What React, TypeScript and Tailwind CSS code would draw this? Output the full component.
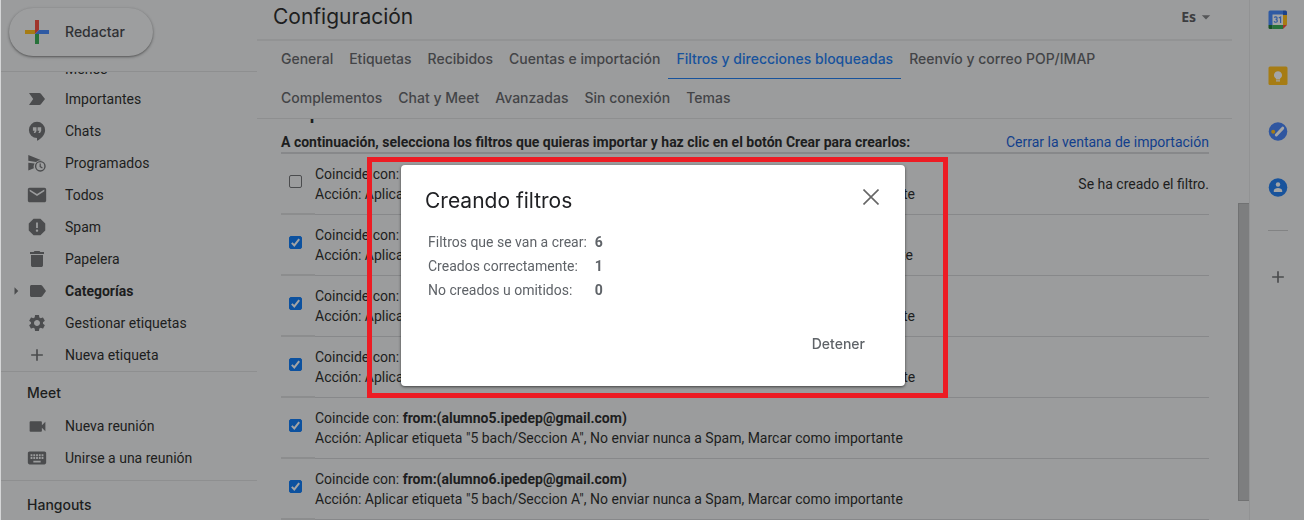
import type { ReactNode } from "react";
import {
  MdAdd,
  MdArrowDropDown,
  MdArrowRight,
  MdKeyboard,
  MdMail,
  MdReport,
  MdSettings,
  MdVideocam,
} from "react-icons/md";

function ImportantIcon() {
  return (
    <svg width="18" height="14" viewBox="0 0 18 14" aria-hidden="true">
      <path fill="currentColor" d="M1 1h10.300c.7 0 1.200.3 1.600.8L17 7l-4.100 5.200c-.4.500-.9.800-1.600.8H1l4.200-6Z" />
    </svg>
  );
}

function HangoutsIcon() {
  return (
    <svg width="18" height="20" viewBox="0 0 18 20" aria-hidden="true">
      <path
        fill="currentColor"
        fillRule="evenodd"
        d="M9 .8a8.1 8.1 0 0 0 0 16.2v2.800c4.800-2.300 8.100-6.500 8.100-10.900A8.100 8.100 0 0 0 9 .8ZM4.900 6.200h3.600v3.700L7.300 12H5.700l1-2.200H4.900Zm4.700 0h3.600v3.700L12 12h-1.600l1-2.200H9.600Z"
      />
    </svg>
  );
}

function ScheduledIcon() {
  return (
    <svg width="18" height="18" viewBox="0 0 18 18" aria-hidden="true">
      <path fill="currentColor" d="M.3 1 14 6.600A6.600 6.600 0 0 0 8 7.900L.3 6.800ZM.3 8.800l6.300.6a6 6 0 0 0-.8 4.900L.3 16.500Z" />
      <circle cx="12.300" cy="12.300" r="4.700" fill="none" stroke="currentColor" strokeWidth="1.400" />
      <path fill="none" stroke="currentColor" strokeWidth="1.200" d="M12.200 9.600v3l2.200 1.300" />
    </svg>
  );
}

function TrashIcon() {
  return (
    <svg width="16" height="18" viewBox="0 0 16 18" aria-hidden="true">
      <path
        fill="currentColor"
        d="M5.500 1h5l.8 1H15v2H1V2h3.700ZM2 5h12v10.200c0 1-.8 1.800-1.800 1.800H3.800c-1 0-1.800-.8-1.800-1.800Z"
      />
    </svg>
  );
}

function LabelIcon() {
  return (
    <svg width="18" height="14" viewBox="0 0 18 14" className="ml-px shrink-0" aria-hidden="true">
      <path
        fill="currentColor"
        d="M2.500 1h9.300c.6 0 1 .3 1.400.8L17 7l-3.800 5.200c-.4.5-.8.8-1.400.8H2.500C1.700 13 1 12.300 1 11.500v-9C1 1.700 1.700 1 2.500 1Z"
      />
    </svg>
  );
}

function PlusLogo() {
  return (
    <svg width="24" height="24" viewBox="0 0 24 24" aria-hidden="true">
      <path fill="#a0342c" d="M10 0h4v10l-4 4Z" />
      <path fill="#a67c14" d="M0 10h10v4H0Z" />
      <path fill="#2f5aa3" d="M14 10h10v4H10Z" />
      <path fill="#27723a" d="M10 14h4v10h-4Z" />
    </svg>
  );
}

function CalendarIcon() {
  return (
    <svg width="20" height="20" viewBox="0 0 20 20" aria-hidden="true">
      <path fill="#2f5aa3" d="M2 .5h13v4.500H5v10H.5V2A1.500 1.500 0 0 1 2 .5Z" />
      <path fill="#1b428c" d="M15 .5h2.500A1.500 1.500 0 0 1 19 2v3h-4Z" />
      <path fill="#a67c14" d="M15 5h4v10h-4Z" />
      <path fill="#27723a" d="M4.500 15H15v4H4.500Z" />
      <path fill="#175227" d="M.5 15h4v4H2a1.500 1.500 0 0 1-1.500-1.500Z" />
      <path fill="#a0342c" d="M15 15h4l-4 4Z" />
      <path fill="#a3a4a5" d="M4.500 4.500H15V15H4.500Z" />
      <path
        fill="none"
        stroke="#2f5aa3"
        strokeWidth="1.200"
        d="M6.300 7.600c.6-1.100 3-.9 2.800.6 0 .9-.8 1.200-1.500 1.200.9 0 1.700.5 1.700 1.500 0 1.600-2.600 1.800-3.200.4M10.800 8.100l1.800-1v6"
      />
    </svg>
  );
}

function KeepIcon() {
  return (
    <svg width="20" height="20" viewBox="0 0 20 20" aria-hidden="true">
      <rect x=".5" y=".5" width="19" height="18.500" rx="1.500" fill="#a67c14" />
      <path fill="#a3a4a5" d="M10 5.200a4 4 0 0 0-2.100 7.400V13.500h4.200v-.9A4 4 0 0 0 10 5.200ZM8 14.200h4v1.300H8Z" />
    </svg>
  );
}

function TasksIcon() {
  return (
    <svg width="20" height="20" viewBox="0 0 20 20" aria-hidden="true">
      <circle cx="10" cy="9.500" r="9.300" fill="#2f56a0" />
      <path stroke="#a3a4a5" strokeWidth="3" strokeLinecap="round" d="m8.300 13 6.400-6.800" />
      <circle cx="5.200" cy="9.800" r="2" fill="#a67c14" />
    </svg>
  );
}

function ContactsIcon() {
  return (
    <svg width="20" height="20" viewBox="0 0 20 20" aria-hidden="true">
      <circle cx="10" cy="9.500" r="9.300" fill="#18539c" />
      <circle cx="10" cy="6.500" r="2.200" fill="#a3a4a5" />
      <path fill="#a3a4a5" d="M5.800 14v-1.300c0-1.800 2.200-2.700 4.200-2.700s4.200.9 4.200 2.700V14Z" />
    </svg>
  );
}

type NavItem = { label: string; icon?: ReactNode; bold?: boolean; expandable?: boolean };

const folders: NavItem[] = [
  { label: "Importantes", icon: <ImportantIcon /> },
  { label: "Chats", icon: <HangoutsIcon /> },
  { label: "Programados", icon: <ScheduledIcon /> },
  { label: "Todos", icon: <MdMail size={22} /> },
  { label: "Spam", icon: <MdReport size={22} /> },
  { label: "Papelera", icon: <TrashIcon /> },
  { label: "Categorías", icon: <LabelIcon />, bold: true, expandable: true },
  { label: "Gestionar etiquetas", icon: <MdSettings size={20} /> },
  { label: "Nueva etiqueta", icon: <MdAdd size={20} /> },
];

const meetings: NavItem[] = [
  { label: "Nueva reunión", icon: <MdVideocam size={21} /> },
  { label: "Unirse a una reunión", icon: <MdKeyboard size={22} /> },
];

function NavList({ items }: { items: NavItem[] }) {
  return (
    <ul>
      {items.map((item) => (
        <li key={item.label}>
          <a href="#" className="flex h-8 items-center text-sm text-[#1d1e20]">
            <span className="flex w-6 justify-end text-[#4b4c4e]">
              {item.expandable && <MdArrowRight size={18} />}
            </span>
            <span className="flex w-6 justify-center text-[#4b4c4e]">{item.icon}</span>
            <span className={item.bold ? "ml-4 font-bold" : "ml-4"}>{item.label}</span>
          </a>
        </li>
      ))}
    </ul>
  );
}

function Sidebar() {
  return (
    <aside className="flex w-64 shrink-0 flex-col">
      <div className="z-10 h-[72px] shrink-0 border-b border-[#8e8f90] bg-[#9b9c9d] pt-2 pl-2">
        <button
          type="button"
          className="flex h-12 w-36 items-center gap-4 rounded-full bg-[#9d9e9f] pl-4 font-[Inter,sans-serif] text-sm font-medium text-[#303134] shadow-[0_1px_2px_rgba(0,0,0,0.35),0_1px_3px_1px_rgba(0,0,0,0.1)]"
        >
          <PlusLogo />
          Redactar
        </button>
      </div>
      <nav className="-mt-[21px] flex flex-col">
        <button type="button" className="flex h-8 items-end pb-1 pl-16 text-sm text-[#1d1e20]">
          Menos
        </button>
        <NavList items={folders} />
        <section className="border-t border-[#8e8f90] pb-[6px]">
          <h2 className="flex h-[38px] items-center pt-1 pl-[26px] font-[Inter,sans-serif] text-sm font-medium text-[#1d1e20]">
            Meet
          </h2>
          <NavList items={meetings} />
        </section>
        <section className="border-t border-[#8e8f90]">
          <h2 className="flex h-[46px] items-center pt-0.5 pl-[26px] font-[Inter,sans-serif] text-sm font-medium text-[#1d1e20]">
            Hangouts
          </h2>
        </section>
      </nav>
    </aside>
  );
}

const tabRows = [
  [
    "General",
    "Etiquetas",
    "Recibidos",
    "Cuentas e importación",
    "Filtros y direcciones bloqueadas",
    "Reenvío y correo POP/IMAP",
  ],
  ["Complementos", "Chat y Meet", "Avanzadas", "Sin conexión", "Temas"],
];
const activeTab = "Filtros y direcciones bloqueadas";

function Tabs() {
  return (
    <nav className="-mt-px border-b border-[#8e8f90] pl-4 font-[Inter,sans-serif] text-sm font-medium">
      {tabRows.map((row) => (
        <div key={row[0]} className="flex h-[39px]">
          {row.map((tab) => (
            <a
              key={tab}
              href="#"
              className={
                tab === activeTab
                  ? "flex items-center border-b border-[#18539c] px-2 text-[#18539c]"
                  : "flex items-center border-b border-transparent px-2 text-[#434447]"
              }
            >
              {tab}
            </a>
          ))}
        </div>
      ))}
    </nav>
  );
}

const filters = [
  { account: "alumno1", tag: "1er bach/Seccion A", created: true },
  { account: "alumno2", tag: "2.º bach/Seccion A" },
  { account: "alumno3", tag: "3er bach/Seccion A" },
  { account: "alumno4", tag: "4to bach/Seccion A" },
  { account: "alumno5", tag: "5 bach/Seccion A" },
  { account: "alumno6", tag: "5 bach/Seccion A" },
];

function FilterRow({ account, tag, created = false }: { account: string; tag: string; created?: boolean }) {
  const id = `filtro-${account}`;
  return (
    <tr className="h-[61px]">
      <td className="w-[34px] border-b-2 border-[#8c8d8e] pb-1 pl-2">
        <span className="relative flex size-[13px]">
          <input
            id={id}
            type="checkbox"
            defaultChecked={!created}
            className="size-[13px] appearance-none rounded-xs border border-[#4b4c4e] checked:border-[#0c519f] checked:bg-[#0c519f]"
          />
          {!created && (
            <svg
              className="pointer-events-none absolute inset-0"
              width="13"
              height="13"
              viewBox="0 0 13 13"
              aria-hidden="true"
            >
              <path d="m2.800 6.900 2.500 2.500 4.900-6.200" fill="none" stroke="#a3a4a5" strokeWidth="2" />
            </svg>
          )}
        </span>
      </td>
      <td className="border-b border-[#87888a]">
        <label htmlFor={id} className="block leading-5 whitespace-nowrap">
          Coincide con: <b>{`from:(${account}.ipedep@gmail.com)`}</b>
          <br />
          {`Acción: Aplicar etiqueta "${tag}", No enviar nunca a Spam, Marcar como importante`}
        </label>
      </td>
      <td className="border-b border-[#87888a] text-right">{created && "Se ha creado el filtro."}</td>
    </tr>
  );
}

function Settings() {
  return (
    <main className="flex min-w-0 flex-1 flex-col">
      <div className="mr-[17px]">
        <header className="flex h-[41px] items-center justify-between border-b-2 border-[#929394] pr-4 pb-[6px] pl-4">
          <h1 className="font-[Inter,sans-serif] text-[21px] text-[#1d1e20]">Configuración</h1>
          <button
            type="button"
            className="flex items-center font-[Noto_Sans,sans-serif] text-sm font-bold text-[#3c3d40]"
          >
            Es
            <MdArrowDropDown size={20} className="text-[#555658]" />
          </button>
        </header>
        <Tabs />
      </div>
      <div className="flex min-h-0 flex-1 justify-between overflow-hidden">
        <section className="-mt-4 min-w-0 flex-1 pl-6 text-sm text-[#1d1e20]">
          <h2 className="pl-2 text-lg leading-5 font-bold">Importar filtros</h2>
          <div className="flex h-[31px] items-end justify-between border-b-2 border-[#87888a]">
            <p className="font-bold leading-5">
              A continuación, selecciona los filtros que quieras importar y haz clic en el botón Crear para crearlos:
            </p>
            <a href="#" className="leading-5 text-[#123f8c]">
              Cerrar la ventana de importación
            </a>
          </div>
          <table className="w-full border-separate border-spacing-0">
            <tbody>
              {filters.map((filter) => (
                <FilterRow key={filter.account} {...filter} />
              ))}
            </tbody>
          </table>
        </section>
        <div className="ml-[29px] flex w-[11px] shrink-0 flex-col pt-[84px] pb-[19px]">
          <div className="flex-1 border border-r-0 border-[#717273] bg-[#7d7e7f]" />
        </div>
      </div>
    </main>
  );
}

function SideRail() {
  return (
    <aside className="flex w-[55px] shrink-0 flex-col items-center gap-9 border-l border-[#929394] pt-[10px] pl-px text-[#4b4c4e]">
      <CalendarIcon />
      <KeepIcon />
      <TasksIcon />
      <ContactsIcon />
      <hr className="-mt-1 w-5 border-[#828384]" />
      <MdAdd size={20} />
    </aside>
  );
}

const results = [
  ["Filtros que se van a crear:", "6"],
  ["Creados correctamente:", "1"],
  ["No creados u omitidos:", "0"],
];

function ProgressDialog() {
  return (
    <div className="fixed inset-0 z-20 flex items-center justify-center pt-[31px] pl-[2px]">
      <div
        role="dialog"
        aria-labelledby="dialog-title"
        className="relative w-[504px] rounded-sm bg-white text-sm text-[#5f6368] shadow-[0_1px_3px_rgba(0,0,0,0.6)]"
      >
        <div className="pointer-events-none absolute -top-2 -right-[43px] -bottom-3 -left-[34px] border-5 border-[#ed1c24]" />
        <div className="flex items-start justify-between pt-5 pr-6 pl-6">
          <h2 id="dialog-title" className="font-[Inter,sans-serif] text-[21px] leading-8 text-[#202124]">
            Creando filtros
          </h2>
          <button type="button" aria-label="Cerrar" className="p-1 pr-0.5 text-[#666]">
            <svg width="16" height="16" viewBox="0 0 16 16" aria-hidden="true">
              <path d="M.5.5l15 15M15.500.5l-15 15" stroke="currentColor" strokeWidth="1.600" />
            </svg>
          </button>
        </div>
        <table className="mt-[13px] ml-[27px]">
          <tbody>
            {results.map(([label, value]) => (
              <tr key={label} className="h-6">
                <td className="pr-2">{label}</td>
                <td className="font-bold">{value}</td>
              </tr>
            ))}
          </tbody>
        </table>
        <div className="flex justify-end pt-[30px] pr-10 pb-[30px]">
          <button type="button" className="font-[Inter,sans-serif] leading-6 font-medium">
            Detener
          </button>
        </div>
      </div>
    </div>
  );
}

export default function App() {
  return (
    <div className="flex h-screen overflow-hidden border-l border-[#d5d6d7] bg-[#9b9c9d] font-[Roboto,sans-serif]">
      <Sidebar />
      <Settings />
      <SideRail />
      <ProgressDialog />
    </div>
  );
}
